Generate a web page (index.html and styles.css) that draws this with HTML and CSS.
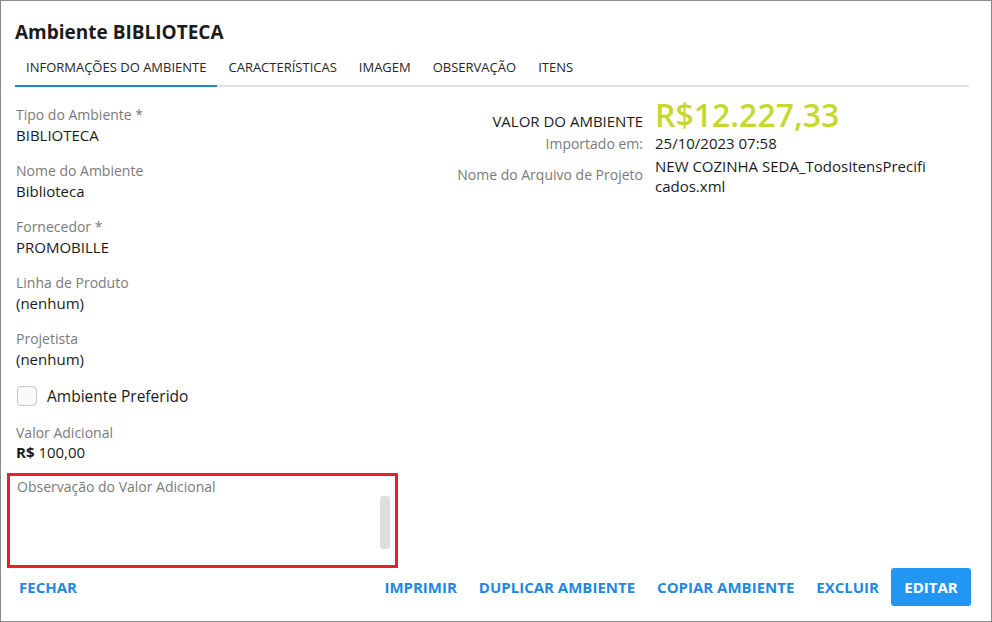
FILE: index.html
```html
<!DOCTYPE html>
<html lang="pt-BR">
<head>
<meta charset="utf-8">
<title>Ambiente BIBLIOTECA</title>
<link rel="stylesheet" href="styles.css">
</head>
<body>
<div class="dialog">
  <h1 class="title">Ambiente BIBLIOTECA</h1>
  <nav class="tabs">
    <span class="tab active">INFORMAÇÕES DO AMBIENTE</span>
    <span class="tab">CARACTERÍSTICAS</span>
    <span class="tab">IMAGEM</span>
    <span class="tab">OBSERVAÇÃO</span>
    <span class="tab">ITENS</span>
  </nav>
  <main class="content">
    <section class="left">
      <div class="field"><div class="label">Tipo do Ambiente *</div><div class="value">BIBLIOTECA</div></div>
      <div class="field"><div class="label">Nome do Ambiente</div><div class="value">Biblioteca</div></div>
      <div class="field"><div class="label">Fornecedor *</div><div class="value">PROMOBILLE</div></div>
      <div class="field"><div class="label">Linha de Produto</div><div class="value">(nenhum)</div></div>
      <div class="field"><div class="label">Projetista</div><div class="value">(nenhum)</div></div>
      <label class="check"><span class="box"></span><span>Ambiente Preferido</span></label>
      <div class="field tight"><div class="label">Valor Adicional</div><div class="value"><b>R$</b> 100,00</div></div>
      <div class="obs">
        <div class="label">Observação do Valor Adicional</div>
        <div class="thumb"></div>
      </div>
    </section>
    <section class="right">
      <div class="rlabel strong">VALOR DO AMBIENTE</div>
      <div class="price">R$12.227,33</div>
      <div class="rlabel">Importado em:</div>
      <div class="rvalue">25/10/2023 07:58</div>
      <div class="rlabel mid">Nome do Arquivo de Projeto</div>
      <div class="rvalue mid file">NEW COZINHA SEDA_TodosItensPrecificados.xml</div>
    </section>
  </main>
  <footer class="actions">
    <button class="link">FECHAR</button>
    <div class="spacer"></div>
    <button class="link">IMPRIMIR</button>
    <button class="link">DUPLICAR AMBIENTE</button>
    <button class="link">COPIAR AMBIENTE</button>
    <button class="link">EXCLUIR</button>
    <button class="primary">EDITAR</button>
  </footer>
</div>
</body>
</html>
```
FILE: styles.css
```css
* { box-sizing: border-box; }
html, body { margin: 0; padding: 0; background: #fff; }
body { font-family: "Open Sans", "DejaVu Sans", sans-serif; color: #222; }

.dialog {
  width: 992px;
  height: 622px;
  border: 1px solid #8c8c8c;
  display: flex;
  flex-direction: column;
  overflow: hidden;
}

.title {
  margin: 0;
  padding: 19px 0 0 14px;
  font-size: 19px;
  line-height: 24px;
  font-weight: 700;
  color: #1b1b1b;
}

.tabs {
  display: flex;
  margin: 3px 22px 0 14px;
  border-bottom: 2px solid #e2e2e2;
  height: 40px;
}
.tab {
  padding: 0 11px;
  font-size: 13px;
  font-weight: 500;
  color: #262626;
  line-height: 40px;
  margin-bottom: -2px;
  border-bottom: 2px solid transparent;
}
.tab.active { border-bottom-color: #1a88d8; }

.content {
  flex: 1;
  display: flex;
  padding: 18px 0 0 0;
}

.left {
  width: 438px;
  padding-left: 15px;
}
.field { margin-bottom: 16px; }
.label {
  font-size: 14px;
  line-height: 20px;
  color: #7a7a7a;
}
.value {
  font-size: 15px;
  line-height: 20px;
  color: #1b1b1b;
  font-weight: 500;
}
.value b { font-weight: 700; }
.field.tight .value { margin-top: -1px; }

.check {
  display: flex;
  align-items: center;
  gap: 10px;
  margin: -1px 0 15px 1px;
  height: 24px;
  font-size: 15.5px;
  color: #1b1b1b;
  font-weight: 500;
}
.box {
  width: 20px;
  height: 20px;
  border: 1px solid #c9c9c9;
  border-radius: 4px;
  background: #fafafa;
}

.obs {
  margin-left: -9px;
  margin-top: -5px;
  width: 391px;
  height: 95px;
  border: 3px solid #e8202a;
  padding: 1px 0 0 7px;
  position: relative;
}
.thumb {
  position: absolute;
  right: 5px;
  top: 20px;
  width: 10px;
  height: 53px;
  border-radius: 3px;
  background: #dedede;
}

.right {
  display: grid;
  grid-template-columns: 204px 275px;
  column-gap: 12px;
  align-content: start;
  align-items: baseline;
  margin-top: -6px;
}
.rlabel {
  text-align: right;
  font-size: 14px;
  line-height: 20px;
  color: #7a7a7a;
}
.rlabel.strong {
  color: #1b1b1b;
  font-size: 15px;
  font-weight: 500;
}
.price {
  font-size: 32px;
  line-height: 32px;
  margin-bottom: 2px;
  font-weight: 600;
  color: #c6d82e;
}
.rvalue {
  font-size: 15px;
  line-height: 20px;
  color: #1b1b1b;
  font-weight: 500;
}
.mid { align-self: center; }
.file { word-break: break-all; margin-top: 2px; }

.actions {
  display: flex;
  align-items: center;
  padding: 0 20px 18px 7px;
  height: 57px;
}
.spacer { flex: 1; }
button {
  font-family: inherit;
  font-size: 15px;
  font-weight: 700;
  border: 0;
  background: none;
  cursor: pointer;
}
.link {
  color: #1f88e0;
  padding: 0 11px;
  height: 38px;
}
.primary {
  margin-left: 1px;
  background: #2196f3;
  color: #fff;
  border-radius: 3px;
  width: 80px;
  height: 38px;
}
```
